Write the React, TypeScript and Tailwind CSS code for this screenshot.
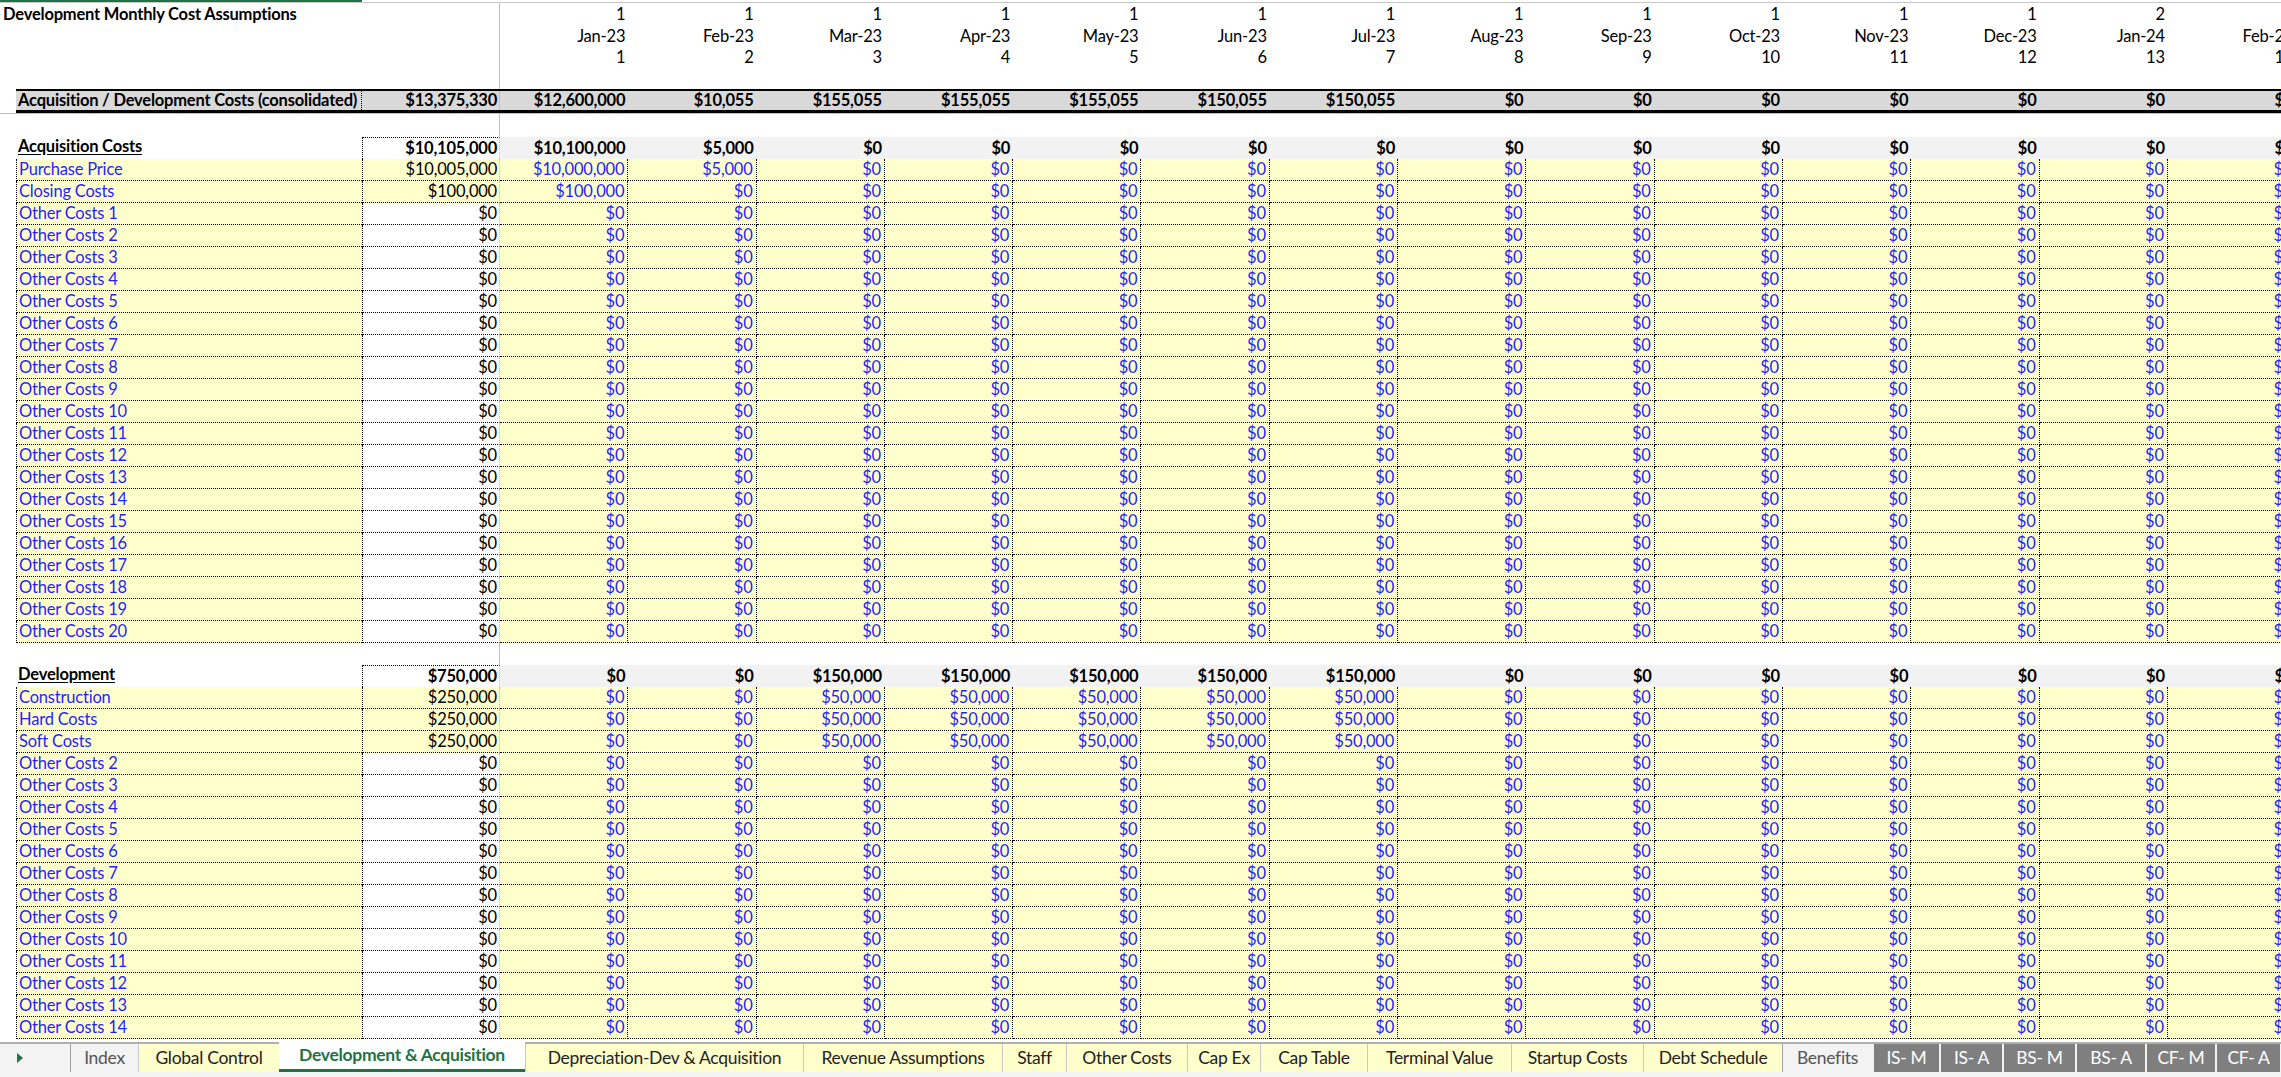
import React from "react";

const months = ["Jan-23","Feb-23","Mar-23","Apr-23","May-23","Jun-23","Jul-23","Aug-23","Sep-23","Oct-23","Nov-23","Dec-23","Jan-24","Feb-24"];
const years = [1,1,1,1,1,1,1,1,1,1,1,1,2,2];
const f = (n: number) => "$" + n.toLocaleString("en-US");
const zeros = () => months.map(() => 0);

const consolidated = [12600000,10055,155055,155055,155055,150055,150055,0,0,0,0,0,0,0];
const acqHead = [10100000,5000,...Array(12).fill(0)];
const devHead = [0,0,150000,150000,150000,150000,150000,...Array(7).fill(0)];
const fifty = [0,0,50000,50000,50000,50000,50000,...Array(7).fill(0)];

type R = { label: string; total: number; vals: number[] };
const acqRows: R[] = [
  { label: "Purchase Price", total: 10005000, vals: [10000000, 5000, ...Array(12).fill(0)] },
  { label: "Closing Costs", total: 100000, vals: [100000, ...Array(13).fill(0)] },
  ...Array.from({ length: 20 }, (_, i) => ({ label: `Other Costs ${i + 1}`, total: 0, vals: zeros() })),
];
const devRows: R[] = [
  { label: "Construction", total: 250000, vals: fifty },
  { label: "Hard Costs", total: 250000, vals: fifty },
  { label: "Soft Costs", total: 250000, vals: fifty },
  ...Array.from({ length: 13 }, (_, i) => ({ label: `Other Costs ${i + 2}`, total: 0, vals: zeros() })),
];

const MW = "w-[128.3px] shrink-0";

function Blank({ h }: { h: string }) {
  return (
    <div className={`flex ${h}`}>
      <div className="w-[500px] shrink-0 border-r border-[#bfbfbf]" />
    </div>
  );
}

function HeadRow({ label, total, vals }: R) {
  return (
    <div className="flex h-[22px] items-center font-bold">
      <div className="w-[16px] shrink-0" />
      <div className="w-[346px] shrink-0 h-full flex items-end pl-[2px]"><span className="underline underline-offset-2">{label}</span></div>
      <div className="w-[138px] shrink-0 h-full text-right pr-[2px] border-t border-x border-dotted border-black border-r-[#bfbfbf] flex items-center justify-end">{f(total)}</div>
      {vals.map((v, i) => (
        <div key={i} className={`${MW} h-full bg-[#f2f2f2] text-right pr-[3px] flex items-center justify-end`}>{f(v)}</div>
      ))}
    </div>
  );
}

function DataRow({ label, total, vals }: R) {
  const yel = ["Purchase Price", "Closing Costs", "Construction", "Hard Costs", "Soft Costs"].includes(label);
  return (
    <div className="flex h-[22px] text-[#1f1fff]">
      <div className="w-[16px] shrink-0" />
      <div className="w-[346px] shrink-0 bg-[#ffffcc] border-l border-b border-dotted border-black pl-[2px] flex items-center">{label}</div>
      <div className={`w-[138px] shrink-0 ${yel ? "bg-[#ffffcc]" : "bg-white"} text-black border-l border-b border-dotted border-black text-right pr-[2px] flex items-center justify-end border-r border-r-[#bfbfbf]`}>{f(total)}</div>
      {vals.map((v, i) => (
        <div key={i} className={`${MW} bg-[#ffffcc] border-r border-b border-dotted border-black text-right pr-[3px] flex items-center justify-end`}>{f(v)}</div>
      ))}
    </div>
  );
}

const tabs: { t: string; w: number; k: "plain" | "y" | "sel" | "g" }[] = [
  { t: "Index", w: 68, k: "plain" },
  { t: "Global Control", w: 141, k: "y" },
  { t: "Development & Acquisition", w: 246, k: "sel" },
  { t: "Depreciation-Dev & Acquisition", w: 278, k: "y" },
  { t: "Revenue Assumptions", w: 199, k: "y" },
  { t: "Staff", w: 64, k: "y" },
  { t: "Other Costs", w: 121, k: "y" },
  { t: "Cap Ex", w: 73, k: "y" },
  { t: "Cap Table", w: 107, k: "y" },
  { t: "Terminal Value", w: 144, k: "y" },
  { t: "Startup Costs", w: 132, k: "y" },
  { t: "Debt Schedule", w: 139, k: "y" },
  { t: "Benefits", w: 90, k: "plain" },
  { t: "IS- M", w: 67, k: "g" },
  { t: "IS- A", w: 63, k: "g" },
  { t: "BS- M", w: 73, k: "g" },
  { t: "BS- A", w: 70, k: "g" },
  { t: "CF- M", w: 70, k: "g" },
  { t: "CF- A", w: 65, k: "g" },
];

export default function App() {
  return (
    <div className="w-[2281px] h-[1077px] overflow-hidden bg-white flex flex-col text-[16.5px] tracking-[-0.2px] text-black" style={{ fontFamily: "Lato, 'Liberation Sans', sans-serif" }}>
      <div className="flex-1 overflow-hidden">
        <div className="flex h-[3px] border-b border-[#c8c8c8]">
          <div className="w-[362px] shrink-0 bg-[#217346]" />
        </div>
        <div className="flex">
          <div className="w-[500px] shrink-0 border-r border-[#bfbfbf] h-[66px] pl-[3px] pt-[1px] font-bold leading-[21px]">Development Monthly Cost Assumptions</div>
          {months.map((m, i) => (
            <div key={m} className={`${MW} text-right pr-[3px] leading-[21.5px] pt-[1px] whitespace-nowrap`}>
              <div>{years[i]}</div>
              <div>{m}</div>
              <div>{i + 1}</div>
            </div>
          ))}
        </div>
        <Blank h="h-[20px]" />
        <div className="flex h-[25px] border-b border-[#bfbfbf]">
          <div className="w-[16px] shrink-0" />
          <div className="flex flex-1 bg-[#d9d9d9] border-t-2 border-b-[3px] border-b-double border-black font-bold">
            <div className="w-[346px] shrink-0 pl-[2px] flex items-center border-r border-dotted border-black whitespace-nowrap">Acquisition / Development Costs (consolidated)</div>
            <div className="w-[138px] shrink-0 text-right pr-[2px] flex items-center justify-end border-r border-[#bfbfbf]">{f(13375330)}</div>
            {consolidated.map((v, i) => (
              <div key={i} className={`${MW} text-right pr-[3px] flex items-center justify-end`}>{f(v)}</div>
            ))}
          </div>
        </div>
        <Blank h="h-[23px]" />
        <HeadRow label="Acquisition Costs" total={10105000} vals={acqHead} />
        {acqRows.map((r) => <DataRow key={r.label} {...r} />)}
        <Blank h="h-[22px]" />
        <HeadRow label="Development" total={750000} vals={devHead} />
        {devRows.map((r) => <DataRow key={r.label} {...r} />)}
      </div>
      <div className="h-[35px] shrink-0 bg-[#f3f3f3] border-t-2 border-[#b0b0b0] flex items-start text-[17.5px] tracking-[-0.3px]">
        <div className="w-[70px] shrink-0 flex items-center h-[28px] pl-[17px]">
          <svg width="7" height="10" viewBox="0 0 7 10"><path d="M0 0L6 5L0 10Z" fill="#217346" /></svg>
        </div>
        {tabs.map((t) => {
          const cls =
            t.k === "sel"
              ? "bg-white text-[#217346] font-bold border-b-[3px] border-[#217346] h-[30px] -mt-[2px]"
              : t.k === "y"
              ? "bg-[#ffffcc] text-[#222] border-l border-[#c8c8c8]"
              : t.k === "g"
              ? "bg-[#7f7f7f] text-white border-l-2 border-[#f3f3f3]"
              : "text-[#555] border-l border-[#a0a0a0]";
          return (
            <div key={t.t} style={{ width: t.w }} className={`shrink-0 h-[28px] flex items-center justify-center whitespace-nowrap overflow-hidden ${cls}`}>
              {t.t}
            </div>
          );
        })}
      </div>
    </div>
  );
}
